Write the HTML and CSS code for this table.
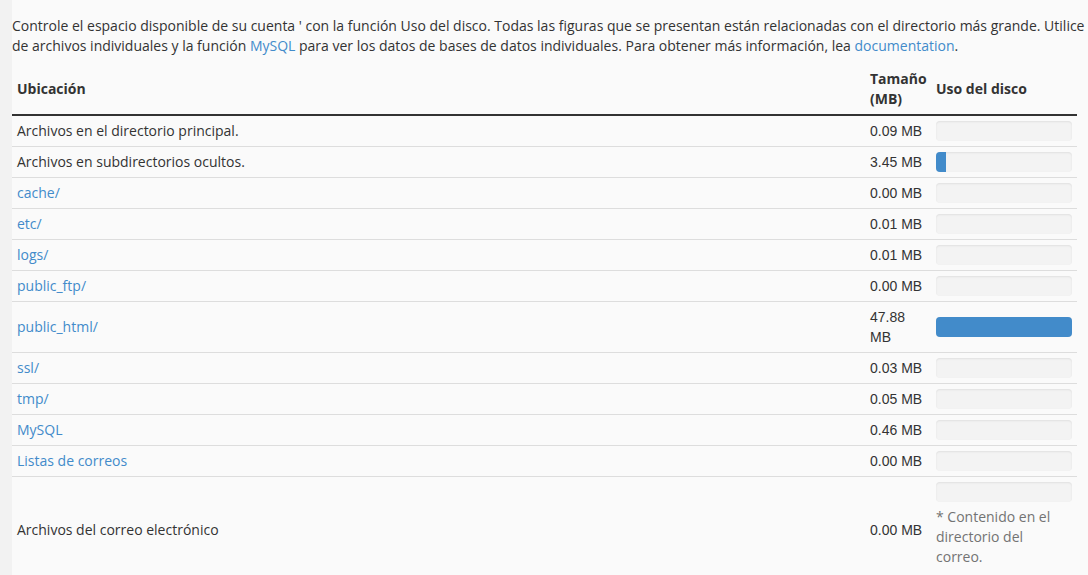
FILE: index.html
```html
<!DOCTYPE html>
<html lang="es">
<head>
<meta charset="utf-8">
<title>Uso del disco</title>
<link rel="stylesheet" href="styles.css">
</head>
<body>
<main class="content">
  <p class="intro">Controle el espacio disponible de su cuenta ' con la función Uso del disco. Todas las figuras que se presentan están relacionadas con el directorio más grande. Utilice el <a href="#">Administrador de archivos</a> para ver los datos<br>de archivos individuales y la función <a href="#">MySQL</a> para ver los datos de bases de datos individuales. Para obtener más información, lea <a href="#">documentation</a>.</p>

  <table class="usage">
    <colgroup>
      <col>
      <col class="col-size">
      <col class="col-bar">
    </colgroup>
    <thead>
      <tr>
        <th>Ubicación</th>
        <th>Tamaño (MB)</th>
        <th>Uso del disco</th>
      </tr>
    </thead>
    <tbody>
      <tr>
        <td>Archivos en el directorio principal.</td>
        <td class="size">0.09 MB</td>
        <td><div class="progress"><div class="bar" style="width:0%"></div></div></td>
      </tr>
      <tr>
        <td>Archivos en subdirectorios ocultos.</td>
        <td class="size">3.45 MB</td>
        <td><div class="progress"><div class="bar" style="width:7.2%"></div></div></td>
      </tr>
      <tr>
        <td><a href="#">cache/</a></td>
        <td class="size">0.00 MB</td>
        <td><div class="progress"><div class="bar" style="width:0%"></div></div></td>
      </tr>
      <tr>
        <td><a href="#">etc/</a></td>
        <td class="size">0.01 MB</td>
        <td><div class="progress"><div class="bar" style="width:0%"></div></div></td>
      </tr>
      <tr>
        <td><a href="#">logs/</a></td>
        <td class="size">0.01 MB</td>
        <td><div class="progress"><div class="bar" style="width:0%"></div></div></td>
      </tr>
      <tr>
        <td><a href="#">public_ftp/</a></td>
        <td class="size">0.00 MB</td>
        <td><div class="progress"><div class="bar" style="width:0%"></div></div></td>
      </tr>
      <tr>
        <td><a href="#">public_html/</a></td>
        <td class="size">47.88 MB</td>
        <td><div class="progress"><div class="bar" style="width:100%"></div></div></td>
      </tr>
      <tr>
        <td><a href="#">ssl/</a></td>
        <td class="size">0.03 MB</td>
        <td><div class="progress"><div class="bar" style="width:0%"></div></div></td>
      </tr>
      <tr>
        <td><a href="#">tmp/</a></td>
        <td class="size">0.05 MB</td>
        <td><div class="progress"><div class="bar" style="width:0%"></div></div></td>
      </tr>
      <tr>
        <td><a href="#">MySQL</a></td>
        <td class="size">0.46 MB</td>
        <td><div class="progress"><div class="bar" style="width:0%"></div></div></td>
      </tr>
      <tr>
        <td><a href="#">Listas de correos</a></td>
        <td class="size">0.00 MB</td>
        <td><div class="progress"><div class="bar" style="width:0%"></div></div></td>
      </tr>
      <tr>
        <td>Archivos del correo electrónico</td>
        <td class="size">0.00 MB</td>
        <td>
          <div class="progress"><div class="bar" style="width:0%"></div></div>
          <span class="help-block">* Contenido en el directorio del correo.</span>
        </td>
      </tr>
    </tbody>
  </table>
</main>
</body>
</html>
```

FILE: styles.css
```css
html, body {
  margin: 0;
  padding: 0;
}

body {
  background: #f2f2f2;
  font-family: "Open Sans", "Liberation Sans", sans-serif;
  font-size: 14px;
  line-height: 20px;
  color: #333333;
  overflow: hidden;
  height: 575px;
}

a {
  color: #428bca;
  text-decoration: none;
}

.content {
  margin-left: 12px;
  padding-top: 16px;
  background: #fafafa;
  min-height: 575px;
}

.intro {
  margin: 0 0 8px 0;
  white-space: nowrap;
}

.usage {
  width: 1065px;
  border-collapse: collapse;
  border-spacing: 0;
  table-layout: fixed;
}

.col-size {
  width: 66px;
}

.col-bar {
  width: 146px;
}

.usage th {
  text-align: left;
  font-weight: 700;
  padding: 5px;
  vertical-align: middle;
  border-bottom: 2px solid #333333;
}

.usage td {
  padding: 5px;
  vertical-align: middle;
  border-bottom: 1px solid #dddddd;
}

.usage tbody tr:last-child td {
  border-bottom: none;
}

.usage td.size {
  font-family: "Liberation Sans", Arial, sans-serif;
}

.progress {
  height: 20px;
  background: #f3f3f3;
  border-radius: 4px;
  box-shadow: inset 0 1px 2px rgba(0, 0, 0, 0.08);
  overflow: hidden;
}

.bar {
  height: 100%;
  background: #428bca;
}

.help-block {
  display: block;
  margin: 5px 0 10px;
  color: #737373;
}
```
